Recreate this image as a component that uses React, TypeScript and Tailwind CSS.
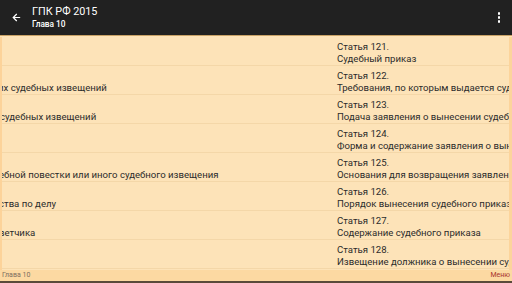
import { ArrowLeft } from "lucide-react";

type Row = { num: number; title: string; left?: string; shift?: number };

// left page is scrolled out of view; only the tail of each line shows
const rows: Row[] = [
  { num: 121, title: "Судебный приказ" },
  { num: 122, title: "Требования, по которым выдается судебный приказ", left: "их судебных извещений", shift: 4 },
  { num: 123, title: "Подача заявления о вынесении судебного приказа", left: "судебных извещений", shift: 2 },
  { num: 124, title: "Форма и содержание заявления о вынесении судебного приказа" },
  { num: 125, title: "Основания для возвращения заявления", left: "ебной повестки или иного судебного извещения", shift: 3 },
  { num: 126, title: "Порядок вынесения судебного приказа", left: "ства по делу", shift: 3 },
  { num: 127, title: "Содержание судебного приказа", left: "ветчика", shift: 3 },
  { num: 128, title: "Извещение должника о вынесении судебного приказа" },
];

export default function App() {
  return (
    <div
      className="w-[512px] h-[283px] flex flex-col overflow-hidden bg-[#fde3b8] text-[#2b2b2b]"
      style={{ fontFamily: "Roboto, 'Noto Sans', sans-serif" }}
    >
      {/* ── Toolbar ── */}
      <div className="h-[35px] shrink-0 bg-[#212121] flex items-center text-white">
        <div className="w-[31px] flex justify-center pl-[1px]">
          <ArrowLeft size={11} strokeWidth={2.6} />
        </div>
        <div className="flex flex-col ml-[1px] leading-none">
          <span className="text-[10.8px] leading-[13px]">ГПК РФ 2015</span>
          <span className="text-[8.3px] font-medium leading-[11px] mt-[1px]">Глава 10</span>
        </div>
        <div className="ml-auto mr-[12px] flex flex-col gap-[1.5px]">
          <span className="w-[2.5px] h-[2.5px] rounded-full bg-white" />
          <span className="w-[2.5px] h-[2.5px] rounded-full bg-white" />
          <span className="w-[2.5px] h-[2.5px] rounded-full bg-white" />
        </div>
      </div>
      <div className="h-[1px] shrink-0 bg-[#c9a266]" />

      {/* ── Pages ── */}
      <div className="flex-1 flex pt-[1px] min-h-0">
        <div className="w-[334px] shrink-0 overflow-hidden border-l-[2px] border-[#fcd39a]">
          {rows.map((r) => (
            <div key={r.num} className="h-[29px] border-b border-[#f4d7a8] flex flex-col pt-[4px] text-[9.6px] leading-[12px] whitespace-nowrap overflow-hidden">
              <span className="h-[12px]" />
              {r.left && (
                <span style={{ marginLeft: -(r.shift ?? 0) }}>{r.left}</span>
              )}
            </div>
          ))}
        </div>
        <div className="flex-1 overflow-hidden border-r-[3px] border-[#fcd49b]">
          {rows.map((r) => (
            <div key={r.num} className="h-[29px] border-b border-[#f4d7a8] flex flex-col pt-[4px] pl-[3px] text-[9.6px] leading-[12px] whitespace-nowrap overflow-hidden">
              <span>Статья {r.num}.</span>
              <span>{r.title}</span>
            </div>
          ))}
        </div>
      </div>

      {/* ── Bottom bar ── */}
      <div className="h-[11px] shrink-0 bg-[#fcd9a2] flex items-center justify-between px-[2px] text-[7px] leading-none">
        <span className="text-[#7d6e60]">Глава 10</span>
        <span className="text-[#a8322c]">Меню</span>
      </div>
      <div className="h-[2px] shrink-0 bg-[#5a4a3a]" />
    </div>
  );
}
